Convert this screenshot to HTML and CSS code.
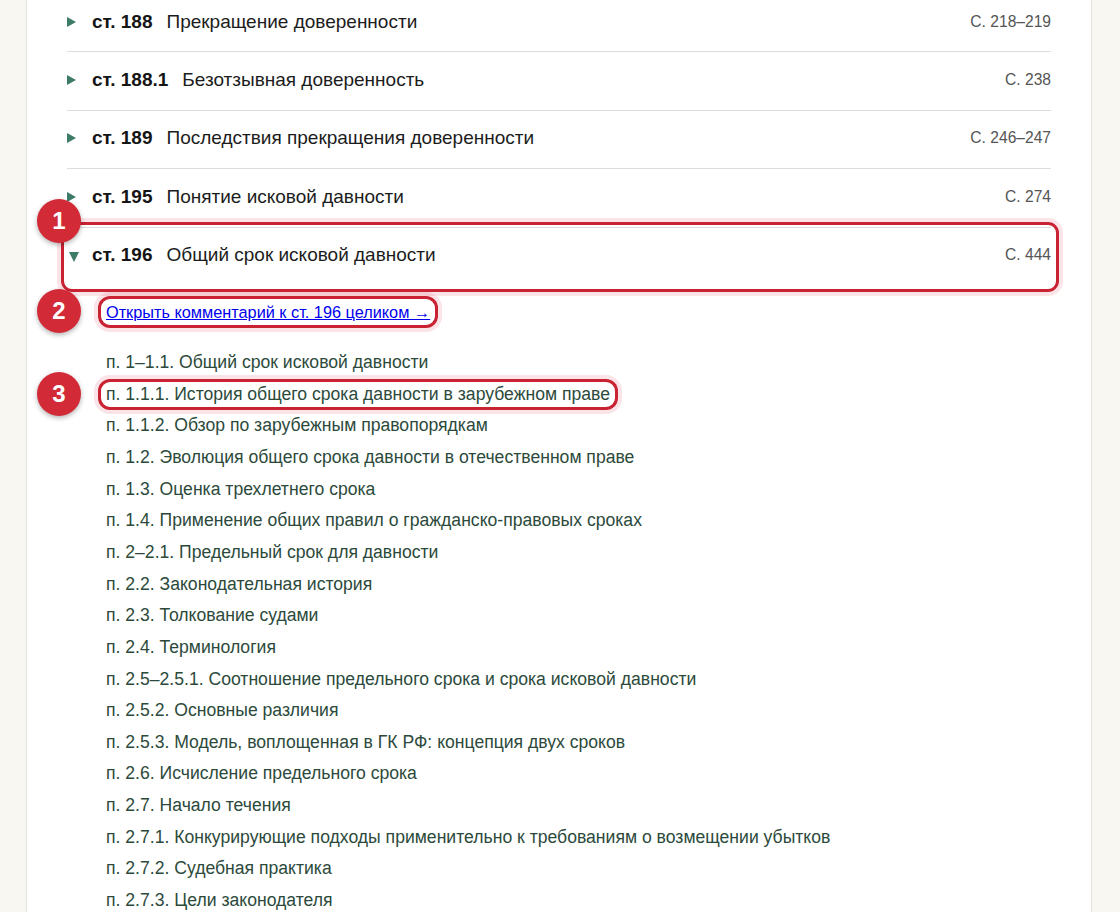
FILE: index.html
```html
<!DOCTYPE html>
<html lang="ru">
<head>
<meta charset="utf-8">
<title>Комментарий к ГК РФ</title>
<link rel="stylesheet" href="styles.css">
</head>
<body>
<main class="panel">
  <ul class="toc">
    <li class="art">
      <div class="art-head">
        <span class="tri"></span>
        <span class="num">ст. 188</span>
        <span class="title">Прекращение доверенности</span>
        <span class="page">С. 218–219</span>
      </div>
    </li>
    <li class="art">
      <div class="art-head">
        <span class="tri"></span>
        <span class="num">ст. 188.1</span>
        <span class="title">Безотзывная доверенность</span>
        <span class="page">С. 238</span>
      </div>
    </li>
    <li class="art">
      <div class="art-head">
        <span class="tri"></span>
        <span class="num">ст. 189</span>
        <span class="title">Последствия прекращения доверенности</span>
        <span class="page">С. 246–247</span>
      </div>
    </li>
    <li class="art">
      <div class="art-head">
        <span class="tri"></span>
        <span class="num">ст. 195</span>
        <span class="title">Понятие исковой давности</span>
        <span class="page">С. 274</span>
      </div>
    </li>
    <li class="art art-open">
      <div class="art-head hl-row">
        <span class="badge badge-row">1</span>
        <span class="tri tri-down"></span>
        <span class="num">ст. 196</span>
        <span class="title">Общий срок исковой давности</span>
        <span class="page">С. 444</span>
      </div>
      <div class="art-body">
        <div class="open-line">
          <a class="open-link hl-ring" href="#">Открыть комментарий к ст. 196 целиком →<span class="badge badge-link">2</span></a>
        </div>
        <ul class="subs">
          <li><a class="sub" href="#">п. 1–1.1. Общий срок исковой давности</a></li>
          <li><a class="sub hl-ring" href="#">п. 1.1.1. История общего срока давности в зарубежном праве<span class="badge badge-sub">3</span></a></li>
          <li><a class="sub" href="#">п. 1.1.2. Обзор по зарубежным правопорядкам</a></li>
          <li><a class="sub" href="#">п. 1.2. Эволюция общего срока давности в отечественном праве</a></li>
          <li><a class="sub" href="#">п. 1.3. Оценка трехлетнего срока</a></li>
          <li><a class="sub" href="#">п. 1.4. Применение общих правил о гражданско-правовых сроках</a></li>
          <li><a class="sub" href="#">п. 2–2.1. Предельный срок для давности</a></li>
          <li><a class="sub" href="#">п. 2.2. Законодательная история</a></li>
          <li><a class="sub" href="#">п. 2.3. Толкование судами</a></li>
          <li><a class="sub" href="#">п. 2.4. Терминология</a></li>
          <li><a class="sub" href="#">п. 2.5–2.5.1. Соотношение предельного срока и срока исковой давности</a></li>
          <li><a class="sub" href="#">п. 2.5.2. Основные различия</a></li>
          <li><a class="sub" href="#">п. 2.5.3. Модель, воплощенная в ГК РФ: концепция двух сроков</a></li>
          <li><a class="sub" href="#">п. 2.6. Исчисление предельного срока</a></li>
          <li><a class="sub" href="#">п. 2.7. Начало течения</a></li>
          <li><a class="sub" href="#">п. 2.7.1. Конкурирующие подходы применительно к требованиям о возмещении убытков</a></li>
          <li><a class="sub" href="#">п. 2.7.2. Судебная практика</a></li>
          <li><a class="sub" href="#">п. 2.7.3. Цели законодателя</a></li>
        </ul>
      </div>
    </li>
  </ul>
</main>
</body>
</html>
```

FILE: styles.css
```css
html, body {
  margin: 0;
  padding: 0;
}
body {
  background: #f8f7f2;
  font-family: "Liberation Sans", Arial, sans-serif;
  color: #1c1c1c;
  overflow: hidden;
  height: 912px;
}
.panel {
  margin-left: 26px;
  width: 1066px;
  min-height: 1000px;
  background: #ffffff;
  border-left: 1px solid #e4e2dc;
  border-right: 1px solid #e4e2dc;
  padding: 0 40px;
  box-sizing: border-box;
}
.toc {
  list-style: none;
  margin: -6px 0 0 0;
  padding: 0;
}
.art {
  border-bottom: 1px solid #dedcd6;
}
.art-open {
  border-bottom: none;
}
.art-head {
  height: 57.4px;
  display: flex;
  align-items: center;
  padding-bottom: 2px;
  box-sizing: border-box;
  position: relative;
}
.tri {
  width: 0;
  height: 0;
  border-left: 9px solid #3d7b69;
  border-top: 5px solid transparent;
  border-bottom: 5px solid transparent;
  margin-right: 16px;
  flex: none;
}
.tri-down {
  border-left: 5px solid transparent;
  border-right: 5px solid transparent;
  border-top: 10px solid #3d7b69;
  border-bottom: none;
  margin-left: 2px;
  margin-right: 13px;
  margin-top: 3px;
}
.num {
  font-weight: bold;
  font-size: 19px;
  color: #151515;
  margin-right: 14px;
}
.title {
  font-size: 19px;
  color: #1c1c1c;
  flex: 1;
}
.page {
  font-size: 15.6px;
  color: #555555;
  margin-right: 0;
}
.hl-row::after {
  content: "";
  position: absolute;
  left: -6px;
  right: -8px;
  top: -6px;
  bottom: -7px;
  border: 3px solid #c92232;
  border-radius: 11px;
  box-shadow: 0 0 0 4px rgba(214, 50, 66, 0.13);
  pointer-events: none;
}
.art-body {
  padding-left: 39px;
  padding-bottom: 20px;
}
.open-line {
  margin-top: 11px;
}
.open-link {
  display: inline-block;
  position: relative;
  font-size: 16.3px;
  line-height: 20px;
  padding: 6px 8px;
  margin-left: -8px;
  color: #0000ee;
  text-decoration: underline;
}
.hl-ring {
  border-radius: 12px;
  box-shadow: inset 0 0 0 3px #c92232, 0 0 0 4px rgba(214, 50, 66, 0.13);
}
.subs {
  list-style: none;
  margin: 19px 0 0 0;
  padding: 0;
}
.sub {
  display: inline-block;
  position: relative;
  font-size: 17.6px;
  line-height: 19.65px;
  padding: 6px 8px;
  margin-left: -8px;
  color: #2c4a3b;
  text-decoration: none;
}
.badge {
  position: absolute;
  width: 44px;
  height: 44px;
  border-radius: 50%;
  background: #d22a37;
  color: #ffffff;
  font-weight: bold;
  font-size: 24px;
  line-height: 44px;
  text-align: center;
  box-shadow: 0 2px 5px rgba(0, 0, 0, 0.3);
  z-index: 2;
  text-decoration: none;
}
.badge-row {
  left: -30px;
  top: -29px;
}
.badge-link {
  left: -61px;
  top: -7px;
}
.badge-sub {
  left: -61px;
  top: -7px;
}
```
